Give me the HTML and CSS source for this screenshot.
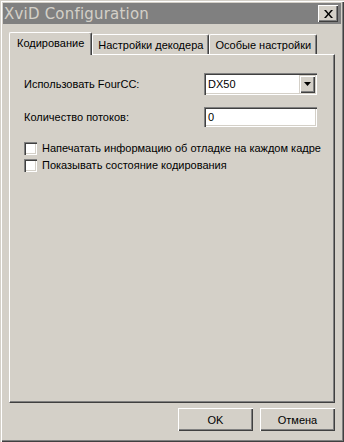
FILE: index.html
```html
<!DOCTYPE html>
<html lang="ru">
<head>
<meta charset="UTF-8">
<title>XviD Configuration</title>
<link rel="stylesheet" href="styles.css">
</head>
<body>

<div class="window">
  <div class="titlebar">
    <span class="title">XviD Configuration</span>
    <button class="close" type="button">
      <svg width="9" height="8" viewBox="0 0 9 8"><path d="M0 0h2l2.5 3 2.5-3h2L5.5 4 9 8H7L4.5 5 2 8H0l3.5-4z" fill="#000"/></svg>
    </button>
  </div>

  <div class="tabs">
    <div class="tab active">Кодирование</div>
    <div class="tab">Настройки декодера</div>
    <div class="tab">Особые настройки</div>
  </div>

  <div class="panel">
    <div class="row">
      <label class="label">Использовать FourCC:</label>
      <div class="combo">
        <span class="combo-value">DX50</span>
        <span class="combo-btn">
          <svg width="7" height="4" viewBox="0 0 7 4"><path d="M0 0h7L3.5 4z" fill="#000"/></svg>
        </span>
      </div>
    </div>
    <div class="row row-input">
      <label class="label">Количество потоков:</label>
      <div class="edit">0</div>
    </div>
    <div class="check first">
      <span class="box"></span>
      <span>Напечатать информацию об отладке на каждом кадре</span>
    </div>
    <div class="check">
      <span class="box"></span>
      <span>Показывать состояние кодирования</span>
    </div>
  </div>

  <div class="buttons">
    <button class="btn" type="button">OK</button>
    <button class="btn" type="button">Отмена</button>
  </div>
</div>

</body>
</html>
```

FILE: styles.css
```css
body {
  margin: 0;
  background: #d4d0c8;
  font-family: 'Liberation Sans', Arial, sans-serif;
  font-size: 11px;
  line-height: 13px;
  color: #000;
}

.window {
  width: 344px;
  height: 442px;
  box-sizing: border-box;
  padding: 3px;
  background: #d4d0c8;
  box-shadow: inset 1px 1px 0 #d4d0c8, inset 2px 2px 0 #fff,
              inset -1px -1px 0 #404040, inset -2px -2px 0 #808080;
}

.titlebar {
  height: 21px;
  background: #808080;
  display: flex;
  align-items: center;
  justify-content: space-between;
  padding: 0 3px 0 1px;
}

.title {
  color: #d4d0c8;
  font-family: 'DejaVu Sans', sans-serif;
  font-size: 15px;
  line-height: 18px;
  letter-spacing: 0.2px;
}

.close {
  width: 20px;
  height: 17px;
  padding: 0;
  margin: 0;
  border: none;
  background: #d4d0c8;
  display: flex;
  align-items: center;
  justify-content: center;
  box-shadow: inset 1px 1px 0 #fff, inset -1px -1px 0 #404040, inset -2px -2px 0 #808080;
}

.tabs {
  display: flex;
  align-items: flex-end;
  height: 22px;
  margin: 8px 0 0 6px;
}

.tab {
  height: 20px;
  box-sizing: border-box;
  padding: 4px 5px 0 5px;
  border-top: 1px solid #fff;
  border-left: 1px solid #fff;
  border-right: 1px solid #404040;
  border-radius: 2px 2px 0 0;
  box-shadow: inset -1px 0 0 #808080;
  white-space: nowrap;
}

.tab.active {
  position: relative;
  z-index: 1;
  height: 23px;
  margin-bottom: -1px;
  padding: 4px 7px 0 7px;
  background: #d4d0c8;
}

.panel {
  width: 326px;
  height: 349px;
  margin-left: 6px;
  box-sizing: border-box;
  padding: 18px 17px 0 14px;
  border-top: 1px solid #fff;
  border-left: 1px solid #fff;
  border-right: 1px solid #404040;
  border-bottom: 1px solid #404040;
  box-shadow: inset -1px -1px 0 #808080;
}

.row {
  display: flex;
  align-items: center;
  justify-content: space-between;
}

.row-input {
  margin-top: 12px;
}

.combo, .edit {
  width: 113px;
  box-sizing: border-box;
  background: #fff;
  box-shadow: inset 1px 1px 0 #808080, inset 2px 2px 0 #404040,
              inset -1px -1px 0 #fff, inset -2px -2px 0 #d4d0c8;
}

.combo {
  height: 22px;
  display: flex;
  align-items: center;
  justify-content: space-between;
  padding: 2px;
}

.combo-value {
  padding-left: 2px;
}

.combo-btn {
  width: 16px;
  height: 18px;
  background: #d4d0c8;
  display: flex;
  align-items: center;
  justify-content: center;
  box-shadow: inset 1px 1px 0 #d4d0c8, inset 2px 2px 0 #fff,
              inset -1px -1px 0 #404040, inset -2px -2px 0 #808080;
}

.edit {
  height: 20px;
  line-height: 20px;
  padding-left: 4px;
}

.check {
  display: flex;
  align-items: center;
  gap: 5px;
  margin-top: 4px;
  white-space: nowrap;
}

.check.first {
  margin-top: 15px;
}

.box {
  width: 13px;
  height: 13px;
  flex: none;
  box-sizing: border-box;
  background: #fff;
  box-shadow: inset 1px 1px 0 #808080, inset 2px 2px 0 #404040,
              inset -1px -1px 0 #fff, inset -2px -2px 0 #d4d0c8;
}

.buttons {
  display: flex;
  justify-content: flex-end;
  gap: 7px;
  margin: 5px 6px 0 0;
}

.btn {
  width: 75px;
  height: 23px;
  padding: 0;
  border: none;
  background: #d4d0c8;
  font-family: 'Liberation Sans', Arial, sans-serif;
  font-size: 11px;
  color: #000;
  box-shadow: inset 1px 1px 0 #fff, inset -1px -1px 0 #404040, inset -2px -2px 0 #808080;
}
```
